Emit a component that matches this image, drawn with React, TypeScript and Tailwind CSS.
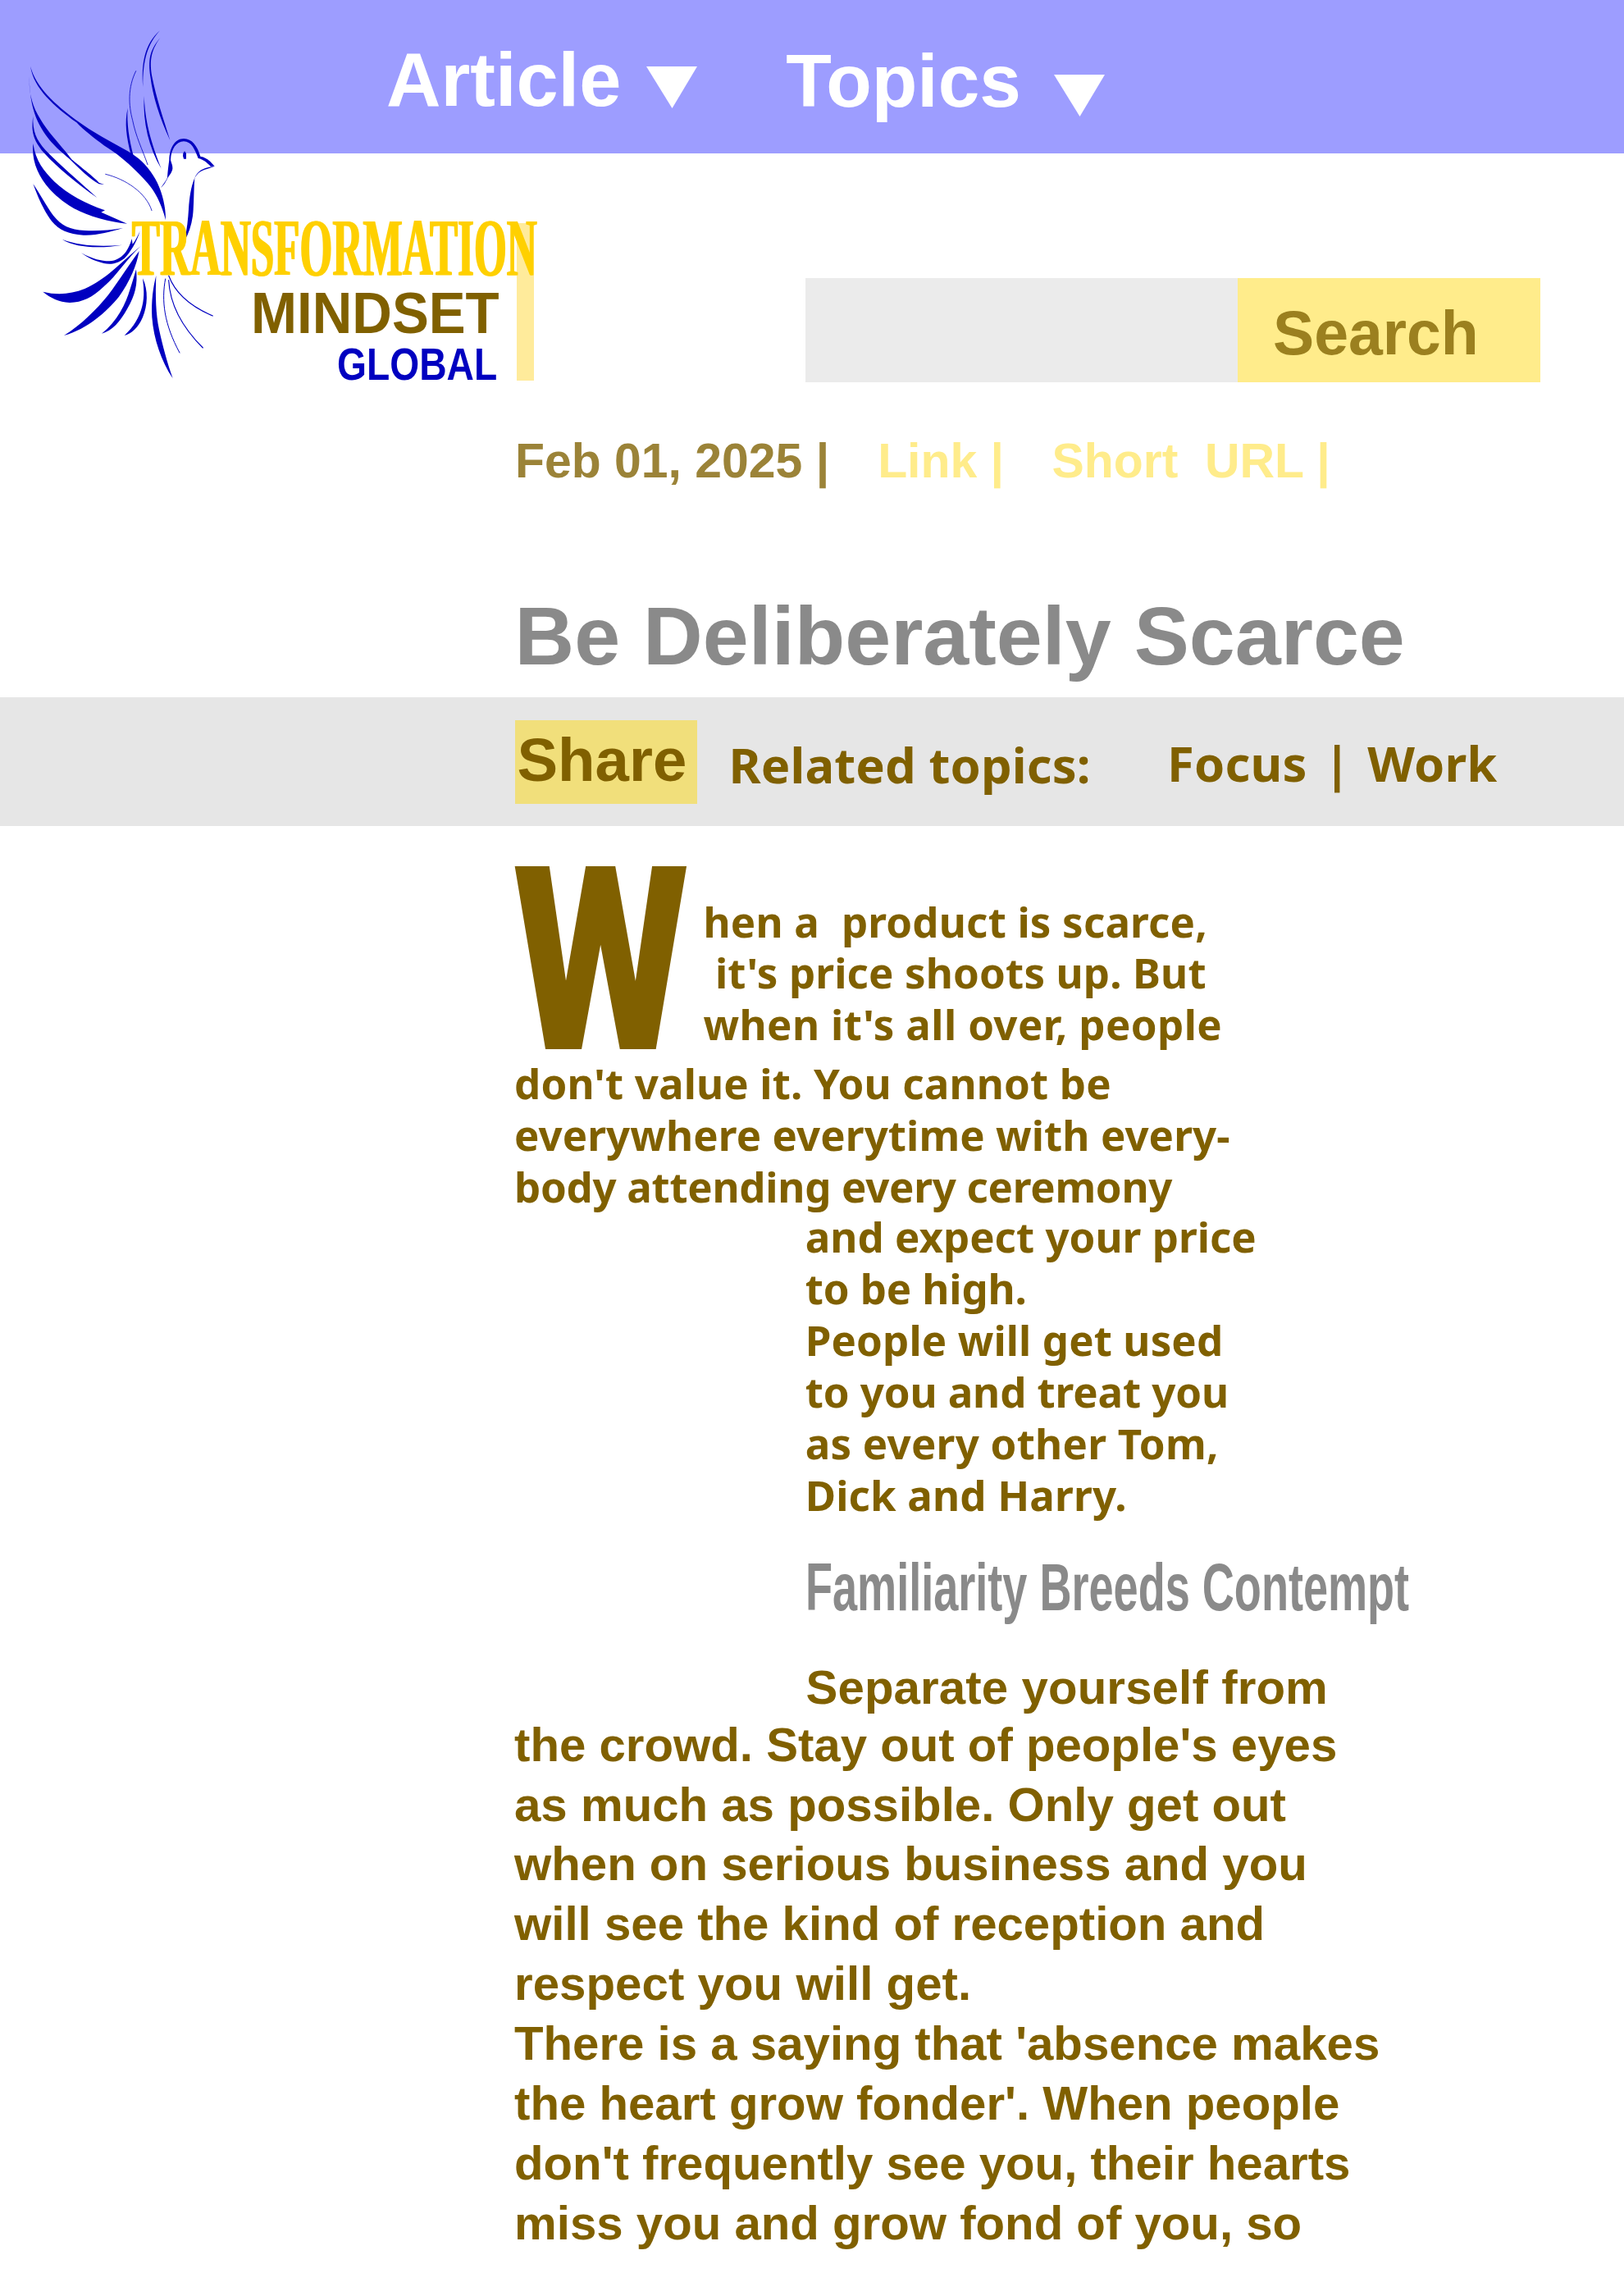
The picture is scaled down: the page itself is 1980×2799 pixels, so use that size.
import React from "react";

function Dove() {
  return (
    <svg className="pointer-events-none absolute left-0 top-0 h-[500px] w-[340px]" viewBox="0 0 1020 1500" fill="#0000c0">
      <path d="M111 242C132 320 200 380 280 440C340 484 405 518 470 554C550 600 606 690 606 805C590 745 570 705 540 670C500 625 450 575 380 532C345 505 305 476 280 448C198 388 124 325 111 242Z" />
      <path d="M107 278C107 310 109 335 112 348C122 400 148 440 183 487C215 525 245 560 262 583C300 615 340 645 362 668L381 675L362 673C325 652 290 617 258 585C240 568 215 550 190 522C145 468 108 410 107 278Z" />
      <path d="M121 425C119 480 132 510 167 550C220 605 280 655 355 723C280 670 215 618 160 558C120 510 114 480 121 425Z" />
      <path d="M121 525C131 590 160 625 200 665C250 712 315 745 384 769L370 776L465 818C400 812 325 792 270 762C225 735 200 712 180 690C140 645 115 590 121 525Z" />
      <path d="M121 672C150 715 170 755 195 788C225 825 255 840 310 843C360 845 400 842 450 834C400 848 355 862 305 860C250 857 215 840 190 810C160 770 140 725 121 672Z" />
      <path d="M227 875C285 898 360 903 447 896C370 909 280 908 227 875Z" />
      <path d="M297 925C340 948 370 955 400 955C450 952 472 910 482 873L485 893C495 880 505 860 512 845C500 885 475 925 455 945C425 968 400 967 380 963C345 955 320 942 297 925Z" />
      <path d="M157 1067C210 1080 260 1076 310 1056C390 1020 430 970 515 900C460 950 430 1005 380 1048C340 1087 300 1107 255 1107C215 1104 185 1090 157 1067Z" />
      <path d="M234 1227C300 1185 350 1135 395 1080C440 1020 470 970 509 918C500 970 475 1030 435 1085C390 1140 320 1203 234 1227Z" />
      <path d="M372 1220C430 1175 460 1110 475 1060C485 1030 492 1005 498 985C504 1040 495 1080 465 1130C440 1175 410 1210 372 1220Z" />
      <path d="M522 1018C543 1060 540 1120 522 1160C505 1200 480 1220 455 1227C490 1195 510 1160 520 1120C530 1080 525 1050 522 1018Z" />
      <path d="M571 1008C568 1080 570 1150 582 1205C595 1265 610 1320 632 1384C590 1320 562 1240 556 1160C553 1100 560 1050 571 1008Z" />
      <path d="M527 350C530 420 540 490 590 617C545 540 522 450 527 350Z" />
      <path d="M467 395C463 450 472 510 489 573L480 570C462 500 455 450 467 395Z" />
      <path d="M586 138C548 190 548 230 556 280C572 360 596 430 622 513C585 435 558 350 550 280C542 220 546 185 586 138Z" />
      <path d="M585 112C540 160 522 220 523 318C516 230 530 160 585 112Z" />
      <path d="M712 650C708 700 710 745 705 790C700 825 690 855 675 880C684 840 688 800 690 765C693 720 698 685 712 650Z" />
      <path d="M588 687C600 670 606 662 612 650C614 620 617 600 619 585C620 540 640 507 672 507C703 507 722 535 733 572C755 576 768 588 785 608L770 608C758 596 745 583 725 579C712 545 700 517 672 517C645 517 626 545 624 585C628 600 632 605 631 618C627 635 618 642 613 652C606 664 602 676 588 687Z" />
      <path d="M785 608C755 612 725 617 710 655C722 632 735 624 757 618Z" />
      <path d="M670 560L675 553L681 560L681 581L672 581L669 570Z" />
      <g fill="none" stroke="#0000c0" strokeWidth="2.4" strokeLinecap="round">
        <path d="M497 260C467 320 470 385 485 440C497 500 520 545 540 602" />
        <path d="M386 637C460 655 535 705 555 770" />
        <path d="M605 1020C590 1100 600 1185 657 1290" strokeWidth="3" />
        <path d="M617 1025C622 1120 670 1200 742 1272" strokeWidth="3.4" />
        <path d="M617 1008C640 1070 690 1118 778 1155" strokeWidth="3.4" />
      </g>
    </svg>
  );
}

function Caret({ className }: { className: string }) {
  return (
    <svg className={`h-[51px] w-[62px] ${className}`} viewBox="0 0 62 51" fill="#fff">
      <path d="M0 0H62L31.5 51Z" />
    </svg>
  );
}

function Header() {
  return (
    <header className="flex h-[187px] items-start bg-[#9d9dff] pl-[471px] font-bold text-white">
      <span className="mt-[47px] text-[92px] leading-[100px]">Article</span>
      <Caret className="ml-[31px] mt-[81px]" />
      <span className="ml-[108px] mt-[49px] text-[91px] leading-[100px]">Topics</span>
      <Caret className="ml-[40px] mt-[91px]" />
    </header>
  );
}

function Brand() {
  return (
    <div className="relative w-[982px] pt-[65px] font-bold">
      <div className="absolute left-[630px] top-[85px] h-[192px] w-[21px] bg-[#ffeb9b]" />
      <div className="relative z-10 ml-[160px] w-[965px] origin-left scale-x-[0.512] font-['Liberation_Serif',serif] text-[100px] leading-[100px] text-[#ffd000] [text-shadow:3px_0_#ffd000]">
        TRANSFORMATION
      </div>
      <div className="ml-[305.5px] mt-px w-[310px] origin-[0_54px] scale-x-[1.004] scale-y-[1.04] text-[67px] leading-[60px] text-[#806000]">MINDSET</div>
      <div className="ml-[411px] mt-[6px] w-[240px] origin-left scale-x-[0.833] text-[55.5px] leading-[50px] text-[#0000c0]">GLOBAL</div>
    </div>
  );
}

export default function App() {
  return (
    <div className="relative h-[2799px] w-[1980px] overflow-hidden bg-white font-['Liberation_Sans',Arial,sans-serif]">
      <Dove />
      <Header />
      <div className="flex h-[339.5px] items-start">
        <Brand />
        <div className="mt-[152px] flex h-[127px]">
          <div className="w-[527px] bg-[#ebebeb]" />
          <div className="w-[369px] bg-[#ffec8b] pl-[43px] pt-[17px] text-[75.2px] font-bold leading-[100px] text-[#9b801f]">Search</div>
        </div>
      </div>
      <div className="flex h-[193px] whitespace-pre pl-[628px] text-[58.9px] font-bold leading-[70px] text-[#ffec8b]">
        <span className="text-[#9b8338]">Feb 01, 2025 |</span>
        <span className="ml-[59px]">Link |</span>
        <span className="ml-[58.5px]">Short  URL |</span>
      </div>
      <h1 className="h-[130.5px] pl-[627.5px] text-[100.65px] font-bold leading-[110px] text-[#8a8a8a]">Be Deliberately Scarce</h1>
      <div className="flex h-[157px] items-start whitespace-nowrap bg-[#e6e6e6] pl-[628px] pt-[27.5px] font-bold text-[#806000]">
        <div className="h-[102px] w-[222px] bg-[#f1df7b] pl-[2.5px] text-[74.4px] leading-[97px]">Share</div>
        <span className="ml-[38.5px] mt-[19.5px] w-[438px] font-['Noto_Sans',sans-serif] text-[59.7px] leading-[70px] tracking-[0.12px]">Related topics:</span>
        <span className="ml-[96.5px] mt-[17.5px] font-['Noto_Sans',sans-serif] text-[59.7px] leading-[70px] tracking-[0.2px] [word-spacing:4.5px]">Focus | Work</span>
      </div>
      <article className="pl-[627px] font-bold text-[#806000]">
        <div className="whitespace-pre font-['Noto_Sans',sans-serif] text-[51px] leading-[62.9px]">
          <div className="flex h-[284.5px]">
            <div className="mt-[-5px] w-[230.5px]">
              <div className="ml-[-2px] w-[230px] origin-left scale-x-[0.79] font-['Roboto',sans-serif] text-[313.6px] font-black leading-[340px]">W</div>
            </div>
            <div className="pt-[84.5px]">
              <p className="tracking-[0.19px]">hen a  product is scarce,</p>
              <p className="pl-px tracking-[0.14px]"> it's price shoots up. But</p>
              <p className="tracking-[0.39px]">when it's all over, people</p>
            </div>
          </div>
          <div className="mt-[-2.2px]">
            <p className="tracking-[0.16px]">don't value it. You cannot be</p>
            <p className="tracking-[0.08px]">everywhere everytime with every-</p>
            <p className="tracking-[-0.28px]">body attending every ceremony</p>
          </div>
          <div className="mt-[-1.7px] pl-[354.7px]">
            <p className="tracking-[0.02px]">and expect your price</p>
            <p className="tracking-[-0.11px]">to be high.</p>
            <p className="tracking-[0.12px]">People will get used</p>
            <p className="tracking-[-0.1px]">to you and treat you</p>
            <p className="tracking-[0.25px]">as every other Tom,</p>
            <p className="tracking-[0.17px]">Dick and Harry.</p>
          </div>
        </div>
        <h2 className="ml-[355px] mt-[41.4px] w-[1200px] origin-left scale-x-[0.6675] text-[81px] leading-[80px] text-[#8a8a8a]">Familiarity Breeds Contempt</h2>
        <div className="mt-[45.5px] text-[58.2px] leading-[72.9px]">
          <p className="h-[70px] pl-[355.5px] tracking-[0.12px]">Separate yourself from</p>
          <p>the crowd. Stay out of people's eyes</p>
          <p>as much as possible. Only get out</p>
          <p>when on serious business and you</p>
          <p>will see the kind of reception and</p>
          <p className="tracking-[0.05px]">respect you will get.</p>
          <p>There is a saying that 'absence makes</p>
          <p>the heart grow fonder'. When people</p>
          <p>don't frequently see you, their hearts</p>
          <p>miss you and grow fond of you, so</p>
        </div>
      </article>
    </div>
  );
}
